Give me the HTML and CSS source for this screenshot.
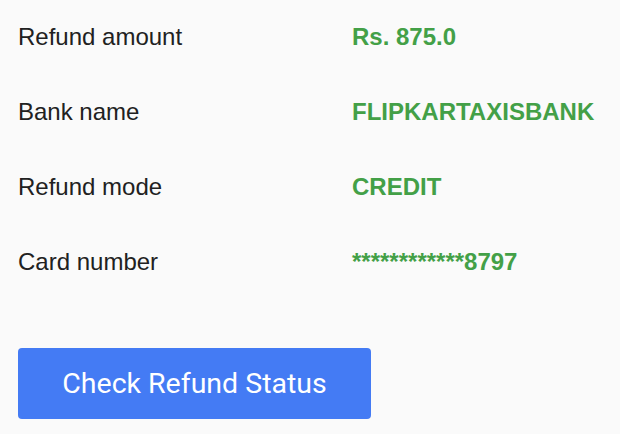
FILE: index.html
```html
<!DOCTYPE html>
<html lang="en">
<head>
  <meta charset="UTF-8" />
  <title>Refund Details</title>
  <link rel="stylesheet" href="styles.css">
</head>
<body>
  <div class="refund-box">
    <div class="row">
      <span class="label">Refund amount</span>
      <span class="value">Rs. 875.0</span>
    </div>
    <div class="row">
      <span class="label">Bank name</span>
      <span class="value">FLIPKARTAXISBANK</span>
    </div>
    <div class="row">
      <span class="label">Refund mode</span>
      <span class="value">CREDIT</span>
    </div>
    <div class="row">
      <span class="label">Card number</span>
      <span class="value">************8797</span>
    </div>

    <button class="status-btn">Check Refund Status</button>
  </div>
</body>
</html>
```

FILE: styles.css
```css
* {
  box-sizing: border-box;
}
body {
  margin: 0;
  background: #fafafa;
  font-family: 'Liberation Sans', Arial, sans-serif;
}
.refund-box {
  padding: 0 18px;
  margin-top: -1px;
}
.row {
  display: flex;
  align-items: center;
  height: 75px;
}
.label {
  width: 334px;
  font-size: 24px;
  color: #212121;
}
.value {
  font-size: 24px;
  font-weight: bold;
  color: #43a047;
}
.status-btn {
  margin-top: 49px;
  width: 353px;
  height: 71px;
  border: none;
  border-radius: 4px;
  background: #447bf4;
  color: #fff;
  font-family: Roboto, sans-serif;
  font-size: 28.5px;
  cursor: pointer;
}
```
